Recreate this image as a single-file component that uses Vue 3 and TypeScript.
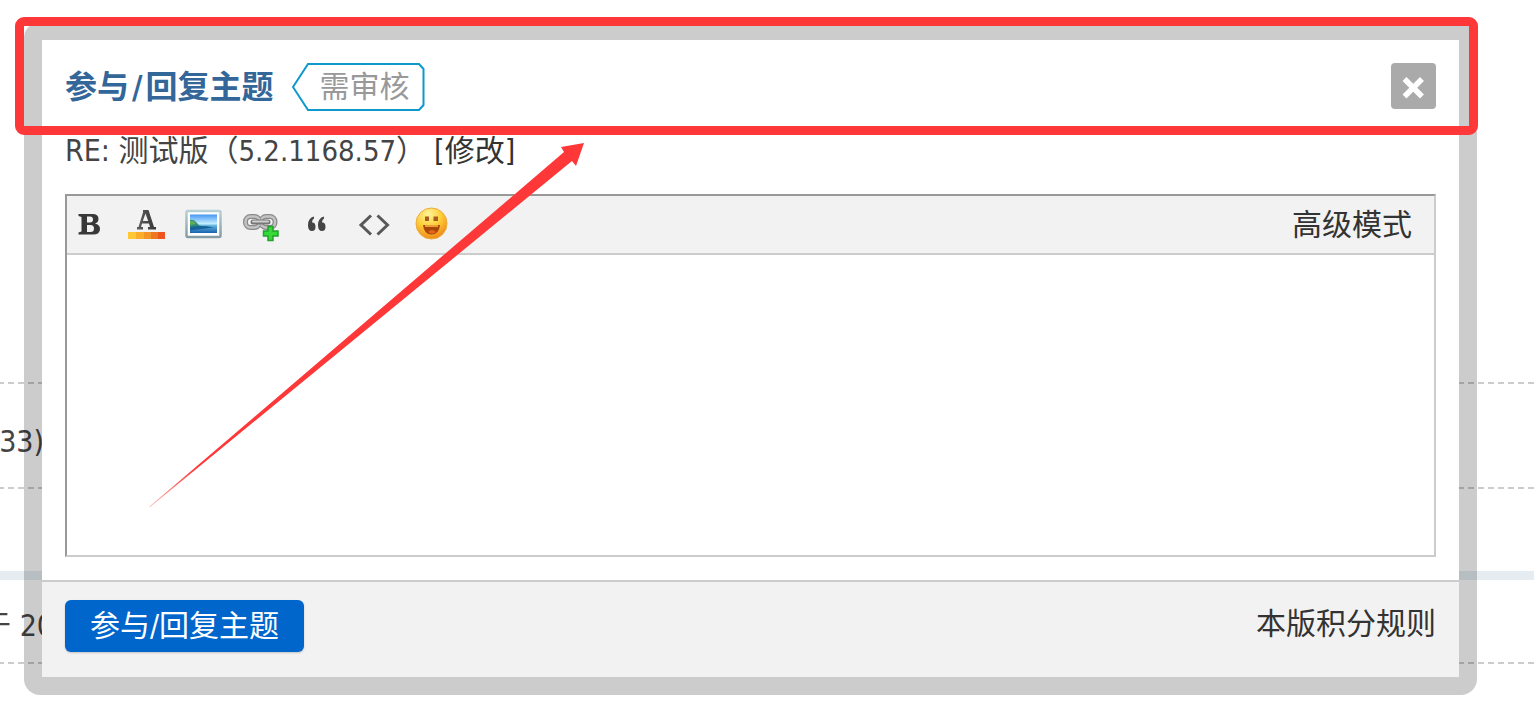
<script setup lang="ts">
import { ref } from 'vue'

const message = ref('')
</script>

<template>
  <div class="page">
    <main class="thread" aria-hidden="true">
      <div class="row row-first"></div>
      <div class="row row-second"><span class="snippet">33)</span></div>
      <div class="row row-third"></div>
      <div class="row row-fourth"><span class="snippet snippet-cut">于 20</span></div>
    </main>

    <section class="dialog" role="dialog" aria-labelledby="dialog-title">
      <div class="panel">
        <header class="head">
          <h1 id="dialog-title" class="title">参与<span class="slash">/</span>回复主题</h1>
          <span class="badge">
            <svg class="badge-shape" width="133" height="48" viewBox="0 0 133 48" aria-hidden="true">
              <path d="M16 1H127L131.500 6V42L127 47H16L1 24Z" fill="#fff" stroke="#0d99cc" stroke-width="2" />
            </svg>
            <span class="badge-text">需审核</span>
          </span>
          <button class="close" type="button" aria-label="关闭">
            <svg width="45" height="46" viewBox="0 0 45 46" aria-hidden="true">
              <path d="M13.500 16L31 33.500M31 16L13.500 33.500" stroke="#fff" stroke-width="5.500" />
            </svg>
          </button>
        </header>

        <div class="body">
          <p class="subject">RE: 测试版（<span class="version">5.2.1168.57</span>）<a class="edit" href="#">[修改]</a></p>

          <div class="editor">
            <div class="toolbar">
              <button class="tool" type="button" aria-label="粗体">
                <svg viewBox="0 0 40 40" aria-hidden="true">
                  <path fill-rule="evenodd" fill="#383838" d="M9.500 10H23.500Q29.500 10 29.500 15Q29.500 18.500 26 19.500Q31 20.500 31 25Q31 30.500 24 30.500H9.500V28.500L12.500 27.500V13L9.500 12ZM18 12.500V18.500H21Q24 18.500 24 15.500Q24 12.500 21 12.500ZM18 21V28H21.500Q25 28 25 24.500Q25 21 21.500 21Z" />
                </svg>
              </button>
              <button class="tool" type="button" aria-label="文字颜色">
                <svg viewBox="0 0 40 40" aria-hidden="true">
                  <defs>
                    <linearGradient id="ink"><stop stop-color="#606060" /><stop offset="1" stop-color="#353535" /></linearGradient>
                  </defs>
                  <path fill-rule="evenodd" fill="url(#ink)" d="M17 6H22.500L28 23H30V25.500H22V23H24L23 19.500H16L15 23H17V25.500H11V23H12.500L17 8.500ZM19.500 9.500L16.800 17H22.200Z" />
                  <path fill="#ffc832" d="M2 28H10V35H2Z" />
                  <path fill="#f9ad28" d="M10 28H18V35H10Z" />
                  <path fill="#f39426" d="M18 28H25V35H18Z" />
                  <path fill="#ee7821" d="M25 28H32V35H25Z" />
                  <path fill="#ee551e" d="M32 28H39V35H32Z" />
                </svg>
              </button>
              <button class="tool" type="button" aria-label="图片">
                <svg viewBox="0 0 40 40" aria-hidden="true">
                  <defs>
                    <linearGradient id="sky" x2="0" y2="1"><stop stop-color="#4796f3" /><stop offset=".5" stop-color="#c4efff" /><stop offset=".6" stop-color="#64b4dc" /><stop offset="1" stop-color="#1761b0" /></linearGradient>
                    <linearGradient id="frame" x2="0" y2="1"><stop stop-color="#b7d0d5" /><stop offset="1" stop-color="#849ca4" /></linearGradient>
                  </defs>
                  <rect x="3.500" y="7" width="34" height="26" rx="1.500" fill="#fff" stroke="url(#frame)" stroke-width="2.500" />
                  <rect x="7" y="10.500" width="27" height="18.500" fill="url(#sky)" />
                  <path d="M7 16Q11 15 14 19T22 22L30 23.500H7Z" fill="#338b77" />
                  <path d="M7 23Q16 21 31 23.500L7 26.500Z" fill="#17649b" />
                  <path d="M7 17Q11 16 13 20L7 21Z" fill="#60ac5b" />
                </svg>
              </button>
              <button class="tool" type="button" aria-label="链接">
                <svg viewBox="0 0 40 40" aria-hidden="true">
                  <g fill="none" stroke="#8a8a8a" stroke-width="5">
                    <rect x="5.500" y="12.500" width="14" height="11" rx="5" />
                    <rect x="21" y="12.500" width="14" height="11" rx="5" />
                  </g>
                  <g fill="none" stroke="#c4c4c4" stroke-width="2.500">
                    <rect x="5.500" y="12.500" width="14" height="11" rx="5" />
                    <rect x="21" y="12.500" width="14" height="11" rx="5" />
                  </g>
                  <path d="M13 18H28" stroke="#777" stroke-width="5" stroke-linecap="round" />
                  <path d="M13 17.500H28" stroke="#d0d0d0" stroke-width="2" stroke-linecap="round" />
                  <path d="M28 22.500H33V27H38V32H33V36.500H28V32H23.500V27H28Z" fill="#35da37" stroke="#23a22c" stroke-width="1.500" />
                </svg>
              </button>
              <button class="tool" type="button" aria-label="引用">
                <svg viewBox="0 0 40 40" aria-hidden="true">
                  <path fill="#444" d="M17 12.500V14.500Q15 15.500 15 18.500Q18.500 18 18.500 23Q18.500 27 15 27Q11 27 11 21Q11 14 17 12.500ZM27 12.500V14.500Q25 15.500 25 18.500Q28.500 18 28.500 23Q28.500 27 25 27Q21 27 21 21Q21 14 27 12.500Z" />
                </svg>
              </button>
              <button class="tool" type="button" aria-label="代码">
                <svg viewBox="0 0 40 40" aria-hidden="true">
                  <path d="M17 11.500L7 21L17 30.500M23.500 11.500L33.500 21L23.500 30.500" fill="none" stroke="#585858" stroke-width="3" />
                </svg>
              </button>
              <button class="tool" type="button" aria-label="表情">
                <svg viewBox="0 0 40 40" aria-hidden="true">
                  <defs>
                    <radialGradient id="face" cx=".4" cy=".2" r=".8"><stop stop-color="#fff39a" /><stop offset=".5" stop-color="#ffd03a" /><stop offset="1" stop-color="#ef8a18" /></radialGradient>
                  </defs>
                  <circle cx="20.500" cy="19.500" r="15.500" fill="url(#face)" stroke="#efaa3b" />
                  <path d="M14 12.500H18V17H14ZM22.500 12.500H27V17H22.500Z" fill="#a65c1a" />
                  <path d="M12 21H29Q28 30.500 20.500 30.500T12 21Z" fill="#a84808" />
                  <path d="M14 21H27V23H14Z" fill="#ed9d39" />
                  <path d="M17 28Q21 24 25 28Q21 31 17 28Z" fill="#e8661c" />
                </svg>
              </button>
              <a class="advanced" href="#">高级模式</a>
            </div>
            <textarea v-model="message" class="message" aria-label="回复内容"></textarea>
          </div>
        </div>

        <footer class="foot">
          <button class="submit" type="button">参与/回复主题</button>
          <a class="rules" href="#">本版积分规则</a>
        </footer>
      </div>
    </section>

    <div class="highlight" aria-hidden="true"></div>
    <svg class="arrow" width="440" height="370" viewBox="0 0 440 370" aria-hidden="true">
      <defs>
        <linearGradient id="fade" gradientUnits="userSpaceOnUse" x1="4" y1="367" x2="50" y2="329">
          <stop stop-color="#fe3838" stop-opacity="0.400" />
          <stop offset="1" stop-color="#fe3838" />
        </linearGradient>
      </defs>
      <path d="M3 367L418 12L415 7L438 3L430 26L426 21L4 367Z" fill="url(#fade)" />
    </svg>
  </div>
</template>

<style>
body {
  margin: 0;
  background: #fff;
}
</style>

<style scoped>
.page {
  position: relative;
  min-height: 100vh;
  overflow: hidden;
  box-sizing: border-box;
  padding: 22px 57px 30px 24px;
  font-family: "DejaVu Sans Condensed", "Noto Sans CJK SC", sans-serif;
  font-size: 30px;
  line-height: 40px;
  color: #444;
}

.page * {
  box-sizing: border-box;
}

a {
  color: #333;
  text-decoration: none;
}

button {
  border: 0;
  padding: 0;
  font: inherit;
  cursor: pointer;
}

.thread {
  position: absolute;
  inset: 0;
}

.row {
  display: flex;
  align-items: center;
  background: repeating-linear-gradient(90deg, #ccc 0 4px, transparent 4px 8px, #ccc 8px 10px) left bottom / 100% 2px no-repeat;
}

.row-first {
  height: 384px;
}

.row-second {
  height: 105px;
  padding-top: 10px;
}

.row-third {
  height: 91px;
  background: none;
  border-bottom: 9px solid #e5edf2;
}

.row-fourth {
  height: 84px;
  padding-top: 8px;
}

.snippet {
  display: flex;
  justify-content: flex-end;
  width: 44px;
  overflow: hidden;
  white-space: nowrap;
}

.snippet-cut {
  width: 54px;
}

.dialog {
  position: relative;
  padding: 18px;
  border-radius: 16px;
  background: linear-gradient(rgba(0, 0, 0, 0.2), rgba(0, 0, 0, 0.2));
}

.panel {
  background: #fff;
}

.head {
  display: flex;
  align-items: flex-start;
  padding: 23px 23px 0;
}

.title {
  margin: 0;
  font-size: 32px;
  line-height: 48px;
  font-weight: 700;
  color: #336699;
}

.slash {
  margin: 0 3px;
}

.badge {
  display: grid;
  align-items: center;
  margin-left: 18px;
  line-height: 48px;
  color: #999;
}

.badge-shape,
.badge-text {
  grid-area: 1 / 1;
}

.badge-text {
  padding-left: 28px;
}

.close {
  display: flex;
  margin-left: auto;
  border-radius: 4px;
  background: #aaa;
}

.body {
  padding: 20px 23px 23px;
}

.subject {
  margin: 0 0 23px;
}

.version {
  font-size: 29px;
}

.edit {
  margin-left: 8px;
}

.editor {
  border: 2px solid;
  border-color: #999 #ccc #ccc #999;
}

.toolbar {
  display: flex;
  align-items: center;
  gap: 17px;
  height: 59px;
  padding: 0 22px 0 2px;
  border-bottom: 2px solid #ccc;
  background: #f2f2f2;
}

.tool {
  width: 40px;
  height: 42px;
  background: none;
}

.tool svg {
  display: block;
  width: 40px;
  height: 40px;
  margin-bottom: 2px;
}

.advanced {
  margin-left: auto;
}

.message {
  display: block;
  width: 100%;
  height: 300px;
  padding: 8px;
  border: 0;
  outline: 0;
  resize: none;
  font: inherit;
}

.foot {
  display: flex;
  align-items: flex-start;
  justify-content: space-between;
  padding: 18px 23px 25px;
  border-top: 2px solid #ccc;
  background: #f2f2f2;
}

.submit {
  height: 52px;
  padding: 0 25px;
  border-radius: 6px;
  background: #0066cc;
  box-shadow: 0 1px 2px rgba(0, 0, 0, 0.2);
  color: #fff;
}

.rules {
  line-height: 48px;
}

.highlight {
  position: absolute;
  top: 17px;
  left: 15px;
  right: 56px;
  height: 118px;
  border: 9px solid #fe3838;
  border-radius: 9px;
}

.arrow {
  position: absolute;
  top: 140px;
  left: 146px;
}
</style>
